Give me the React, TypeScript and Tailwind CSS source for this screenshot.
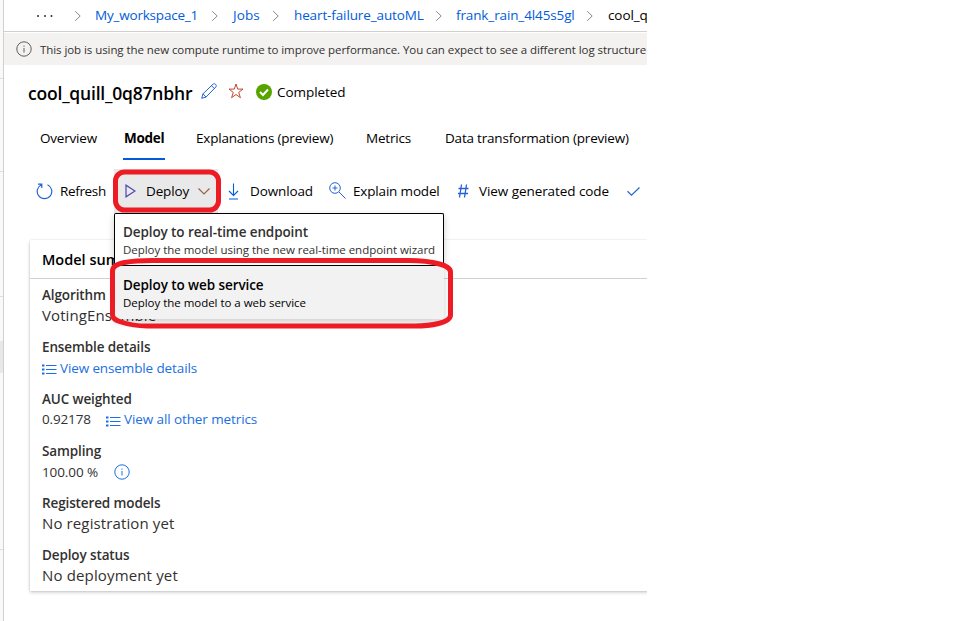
import React from "react";

type IconProps = { className?: string };

function Chevron() {
  return (
    <svg className="h-3 w-[7px] shrink-0" viewBox="0 0 7 12" fill="none" stroke="#8a8886">
      <path d="M.2 1.2 5.2 6 .2 10.8" />
    </svg>
  );
}

function InfoIcon({ className = "" }: IconProps) {
  return (
    <svg className={`h-4 w-4 shrink-0 ${className}`} viewBox="0 0 16 16" fill="none" stroke="currentColor">
      <circle cx="8" cy="8" r="7.2" />
      <path d="M8 7v4.5M8 4.5v1.2" />
    </svg>
  );
}

function ListIcon({ className = "" }: IconProps) {
  return (
    <svg className={`mt-[2px] h-3 w-[15px] shrink-0 ${className}`} viewBox="0 0 15 12" fill="none" stroke="#1a6fe0">
      <path d="M4 2.5h10.500M4 6.500h10.500M4 10.500h10.500" />
      <path d="M0 2.500h2.500M0 6.500h2.500M0 10.500h2.500" strokeWidth="2" />
    </svg>
  );
}

function Group({ label, children }: { label: React.ReactNode; children: React.ReactNode }) {
  return (
    <div className="h-[42px]">
      <div className="flex h-[22px] items-center text-[13.5px] font-semibold tracking-[-0.12px] text-[#323130]">{label}</div>
      <div className="flex h-[19px] items-center text-[#323130]">{children}</div>
    </div>
  );
}

export default function App() {
  return (
    <div className="relative flex h-[621px] w-[960px] overflow-hidden bg-white font-['Open_Sans','Noto_Sans',sans-serif] text-[13.5px] whitespace-nowrap text-black">
      <aside className="flex w-1 shrink-0 flex-col border-r border-[#d2d0ce] bg-[#faf9f8]">
        <div className="h-[79px] border-b border-[#e1dfdd]" />
        <div className="h-[93px] border-b border-[#e1dfdd]" />
        <div className="h-[125px] border-b border-[#e1dfdd]" />
        <div className="mt-[44px] h-[32px] bg-[#e9e8e7]" />
        <div className="h-[177px] border-b border-[#e1dfdd]" />
      </aside>

      <main className="w-[643px] shrink-0 overflow-hidden">
        <nav className="flex h-8 items-center border-b border-[#d2d0ce] text-[#015cda]">
          <svg className="ml-[33px] h-1 w-[38px] shrink-0" viewBox="0 0 38 4" fill="#323130">
            <circle cx="1" cy="2" r="1" />
            <circle cx="8" cy="2" r="1" />
            <circle cx="14.500" cy="2" r="1" />
          </svg>
          <Chevron />
          <span className="ml-[13px] w-[117px] shrink-0 tracking-[-0.2px]">My_workspace_1</span>
          <Chevron />
          <span className="ml-[14px] w-[40px] shrink-0 tracking-[0.1px]">Jobs</span>
          <Chevron />
          <span className="ml-[14px] w-[142px] shrink-0 tracking-[-0.12px]">heart-failure_autoML</span>
          <Chevron />
          <span className="ml-[13px] w-[131px] shrink-0 tracking-[-0.12px]">frank_rain_4l45s5gl</span>
          <Chevron />
          <span className="ml-[14px] w-[39px] overflow-hidden tracking-[-0.1px] text-black">cool_quill_0q87nbhr</span>
        </nav>

        <div className="mt-px flex h-8 items-center bg-[#f3f2f1] pl-[12px] text-[#323130]">
          <InfoIcon className="-mt-px text-[#605e5c]" />
          <span className="ml-2 pt-px text-[11.5px] tracking-[-0.068px]">
            This job is using the new compute runtime to improve performance. You can expect to see a different log structure
          </span>
        </div>

        <header className="flex h-[54px] items-center pl-[24px]">
          <h1 className="w-[173px] pt-[2px] text-[17.5px] font-semibold tracking-[-0.2px]">cool_quill_0q87nbhr</h1>
          <svg className="-mt-[2px] h-4 w-4 shrink-0" viewBox="0 0 16 16" fill="none" stroke="#2463d5">
            <path d="m.7 15.300 1.300-4.500L12 1.200c1.700-1.500 4.300 1 2.800 2.800L5 14.100zM2 10.800l3 3.300M10.500 2.700l3 3" />
          </svg>
          <svg className="-mt-[2px] ml-[11px] h-4 w-4 shrink-0" viewBox="0 0 16 16" fill="none" stroke="#c04a2b">
            <path d="m8 1 1.700 5.100h5.300l-4.300 3.300 1.700 5.300L8 11.500l-4.400 3.200 1.700-5.300L1 6.100h5.300z" />
          </svg>
          <svg className="ml-[12px] h-4 w-4 shrink-0" viewBox="0 0 16 16" fill="none">
            <circle cx="8" cy="8" r="8" fill="#57a300" />
            <path d="m4 8 3 3 5-5.500" stroke="white" strokeWidth="2" />
          </svg>
          <span className="ml-[5px] tracking-[-0.05px]">Completed</span>
        </header>

        <div className="flex h-[41px] pl-[36px] leading-[39px] tracking-[-0.2px]">
          <span className="w-[83px] shrink-0">Overview</span>
          <span className="w-[42px] shrink-0 border-b-2 border-[#015cda] pl-px font-bold tracking-[-0.3px]">Model</span>
          <span className="ml-[31px] w-[170px] shrink-0">Explanations (preview)</span>
          <span className="w-[79px] shrink-0">Metrics</span>
          <span>Data transformation (preview)</span>
        </div>

        <div className="mt-[9px] flex h-[44px] items-center">
          <svg className="ml-8 h-[17px] w-[17px] shrink-0" viewBox="0 0 17 17" fill="none" stroke="#2463d5" strokeWidth="1.200">
            <path d="M11.500 1.700a7.300 7.300 0 1 1-6 0M2 1.200h3.800v3.800" />
          </svg>
          <span className="ml-[7px] w-[54px] shrink-0 tracking-[-0.35px]">Refresh</span>
          <div className="flex h-full w-[104px] shrink-0 items-center bg-[#e9e9e9]">
            <svg className="ml-[11px] h-[14px] w-[11px]" viewBox="0 0 11 14" fill="none" stroke="#4b48b0" strokeWidth="1.200">
              <path d="M1 1.200v11.600L10 7z" />
            </svg>
            <span className="ml-[10px] w-[52px] tracking-[-0.15px]">Deploy</span>
            <svg className="h-[7px] w-3" viewBox="0 0 12 7" fill="none" stroke="#96624a" strokeWidth="1.200">
              <path d="m.5.5 5.500 5.500L11.500.5" />
            </svg>
          </div>
          <svg className="ml-[10px] h-[17px] w-[11px] shrink-0" viewBox="0 0 11 17" fill="none" stroke="#015cda" strokeWidth="1.100">
            <path d="M5.500.5v12M1 8l4.500 4.500L10 8M1 16h9" />
          </svg>
          <span className="ml-[11px] w-[79px] shrink-0 tracking-[-0.12px]">Download</span>
          <svg className="-mt-px h-[17px] w-[17px] shrink-0" viewBox="0 0 17 17" fill="none" stroke="#2463d5">
            <circle cx="6" cy="6" r="5.300" />
            <path d="m10 10 6.500 6.500M3.500 6h5M6 3.500v5" />
          </svg>
          <span className="ml-[7px] w-[104px] shrink-0 tracking-[-0.17px]">Explain model</span>
          <svg className="h-[14px] w-3 shrink-0" viewBox="0 0 12 14" fill="none" stroke="#2463d5" strokeWidth="1.300">
            <path d="M4.500.5 2.500 13.500M9.500.5 7.500 13.500M1.500 4.500h10M1 9.500h10" />
          </svg>
          <span className="ml-[10px] w-[148px] shrink-0 tracking-[-0.07px]">View generated code</span>
          <svg className="h-[9px] w-[13px] shrink-0" viewBox="0 0 13 9" fill="none" stroke="#2463d5" strokeWidth="1.200">
            <path d="M.5 4.300 4.500 8.100 12.500.5" />
          </svg>
        </div>

        <section className="mt-[27px] ml-[26px] h-[351px] w-[640px] bg-white shadow-[0_1.600px_3.600px_rgba(0,0,0,.2),0_0_2px_rgba(0,0,0,.14)]">
          <h2 className="flex h-[39px] items-center border-b border-[#d2d0ce] pt-px pl-[12px] text-[14.500px] font-semibold">Model summary</h2>
          <div className="flex flex-col gap-[10px] pt-[5px] pl-[12px]">
            <Group label="Algorithm">
              <span className="text-[15px] tracking-[0.1px]">VotingEnsemble</span>
            </Group>
            <Group label="Ensemble details">
              <ListIcon />
              <span className="ml-[3px] pt-px tracking-[-0.12px] text-[#1a6fe0]">View ensemble details</span>
            </Group>
            <Group label="AUC weighted">
              <span className="w-16 tracking-[-0.15px]">0.92178</span>
              <ListIcon />
              <span className="ml-[3px] tracking-[-0.1px] text-[#1a6fe0]">View all other metrics</span>
            </Group>
            <Group label="Sampling">
              <span className="w-[72px] pt-px tracking-[-0.1px]">100.00 %</span>
              <InfoIcon className="mt-px text-[#1a6fe0]" />
            </Group>
            <Group label="Registered models">
              <span className="text-[15px] tracking-[0.12px]">No registration yet</span>
            </Group>
            <Group label="Deploy status">
              <span className="text-[15px] tracking-[0.15px]">No deployment yet</span>
            </Group>
          </div>
        </section>
      </main>

      <div className="absolute top-[213px] left-[114px] w-[330px] shadow-[0_3px_7px_rgba(0,0,0,.2)]">
        <div className="h-[52px] rounded-t-[2px] border border-b-0 border-black bg-white pt-[9px] pl-[8px] text-[#323130]">
          <div className="h-[18px] leading-[19px] font-semibold tracking-[-0.1px]">Deploy to real-time endpoint</div>
          <div className="h-[18px] text-[11.500px] leading-[18px] tracking-[-0.03px]">Deploy the model using the new real-time endpoint wizard</div>
        </div>
        <div className="h-[54px] border-t border-black bg-[#f3f2f2] pt-[10px] pl-[9px]">
          <div className="h-[18px] leading-[19px] font-semibold tracking-[-0.08px]">Deploy to web service</div>
          <div className="h-[18px] text-[11.500px] leading-[18px] tracking-[-0.03px]">Deploy the model to a web service</div>
        </div>
      </div>

      <svg className="absolute top-[160px] left-[100px] h-[180px] w-[370px]" viewBox="100 160 370 180" fill="none" stroke="#ed1c24" strokeWidth="5">
        <rect x="115.500" y="172" width="103" height="38" rx="9" />
        <path d="M112.500 271c0-4 4-7 12-8.500s16-2 28-2h256c14 0 24 1.500 31 3.500s11 4 11 8v43c0 4-4 6.500-12 8.500s-14 2.500-24 2.500H147c-12 0-20-2-26-4s-8.500-3.500-8.500-7z" />
      </svg>
    </div>
  );
}
